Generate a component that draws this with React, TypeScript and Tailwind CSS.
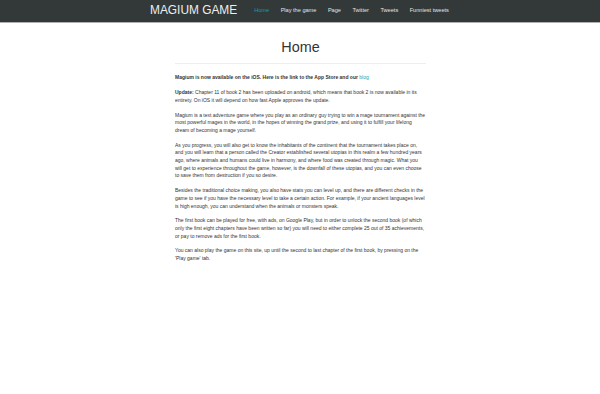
import React from "react";

const navItems = ["Home", "Play the game", "Page", "Twitter", "Tweets", "Funniest tweets"];

export default function App() {
  return (
    <div className="min-h-[394px] bg-white" style={{ fontFamily: '"Liberation Sans", Arial, sans-serif' }}>
      <nav className="h-[23px] bg-[#333939] border-b border-[#adaead]">
        <div className="w-[300px] mx-auto flex items-center h-full whitespace-nowrap">
          <span className="text-[11.9px] leading-none text-[#eeeeee]">MAGIUM GAME</span>
          <ul className="flex items-center gap-[11.5px] ml-[17px] text-[5.6px] leading-none">
            {navItems.map((item, i) => (
              <li key={item} className={i === 0 ? "text-[#1b9ba0]" : "text-[#e2e2e2]"}>
                {item}
              </li>
            ))}
          </ul>
        </div>
      </nav>
      <main className="w-[252px] mx-auto pl-[1px] text-[#333333]">
        <h1 className="text-center text-[14.4px] leading-none font-normal text-[#333] pt-[17px] pb-[9px]">Home</h1>
        <hr className="border-t border-[#eeeeee]" />
        <div className="pt-[10px] text-[5px] leading-[7.7px]">
          <p className="mb-[7px] font-bold">
            Magium is now available on the iOS. Here is the link to the App Store and our{" "}
            <span className="text-[#1ba2b3] font-normal">blog</span>
          </p>
          <p className="mb-[7px]">
            <b>Update:</b> Chapter 11 of book 2 has been uploaded on android, which means that book 2 is now available in its entirety. On iOS it will depend on how fast Apple approves the update.
          </p>
          <p className="mb-[7px]">
            Magium is a text adventure game where you play as an ordinary guy trying to win a mage tournament against the most powerful mages in the world, in the hopes of winning the grand prize, and using it to fulfill your lifelong dream of becoming a mage yourself.
          </p>
          <p className="mb-[7px]">
            As you progress, you will also get to know the inhabitants of the continent that the tournament takes place on, and you will learn that a person called the Creator established several utopias in this realm a few hundred years ago, where animals and humans could live in harmony, and where food was created through magic. What you will get to experience throughout the game, however, is the downfall of these utopias, and you can even choose to save them from destruction if you so desire.
          </p>
          <p className="mb-[7px]">
            Besides the traditional choice making, you also have stats you can level up, and there are different checks in the game to see if you have the necessary level to take a certain action. For example, if your ancient languages level is high enough, you can understand when the animals or monsters speak.
          </p>
          <p className="mb-[7px]">
            The first book can be played for free, with ads, on Google Play, but in order to unlock the second book (of which only the first eight chapters have been written so far) you will need to either complete 25 out of 35 achievements, or pay to remove ads for the first book.
          </p>
          <p className="mb-[7px]">
            You can also play the game on this site, up until the second to last chapter of the first book, by pressing on the 'Play game' tab.
          </p>
        </div>
      </main>
    </div>
  );
}
